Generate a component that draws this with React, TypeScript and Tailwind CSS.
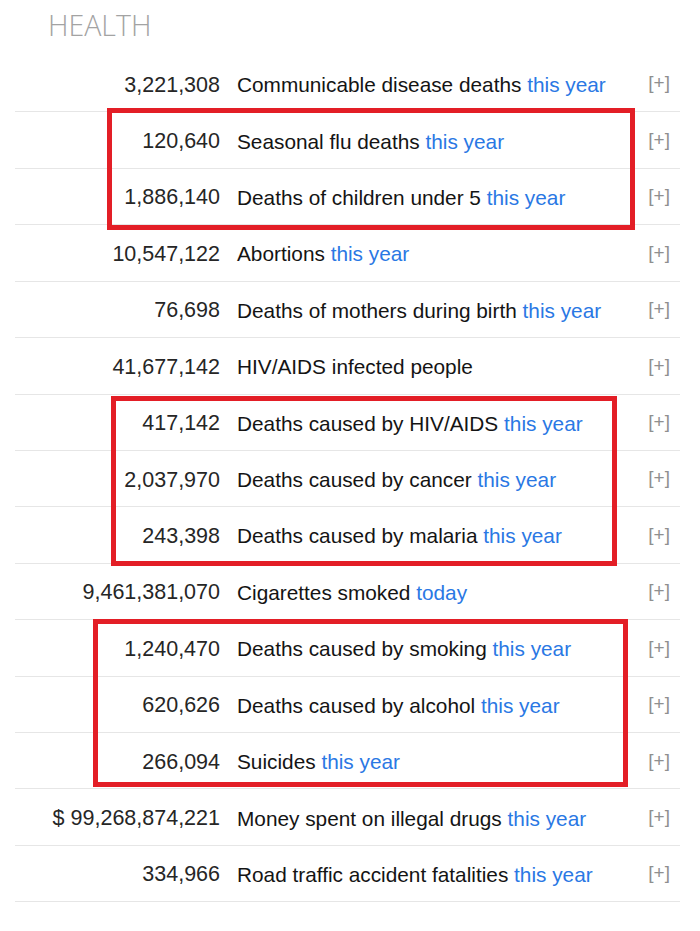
const rows: { value: string; label: string; period?: string }[] = [
  { value: '3,221,308', label: 'Communicable disease deaths', period: 'this year' },
  { value: '120,640', label: 'Seasonal flu deaths', period: 'this year' },
  { value: '1,886,140', label: 'Deaths of children under 5', period: 'this year' },
  { value: '10,547,122', label: 'Abortions', period: 'this year' },
  { value: '76,698', label: 'Deaths of mothers during birth', period: 'this year' },
  { value: '41,677,142', label: 'HIV/AIDS infected people' },
  { value: '417,142', label: 'Deaths caused by HIV/AIDS', period: 'this year' },
  { value: '2,037,970', label: 'Deaths caused by cancer', period: 'this year' },
  { value: '243,398', label: 'Deaths caused by malaria', period: 'this year' },
  { value: '9,461,381,070', label: 'Cigarettes smoked', period: 'today' },
  { value: '1,240,470', label: 'Deaths caused by smoking', period: 'this year' },
  { value: '620,626', label: 'Deaths caused by alcohol', period: 'this year' },
  { value: '266,094', label: 'Suicides', period: 'this year' },
  { value: '$ 99,268,874,221', label: 'Money spent on illegal drugs', period: 'this year' },
  { value: '334,966', label: 'Road traffic accident fatalities', period: 'this year' },
]

// red outlines drawn over groups of rows
const highlights = [
  'left-[107px] top-[108px] w-[528px] h-[122px]',
  'left-[111px] top-[396px] w-[506px] h-[170px]',
  'left-[93px] top-[619px] w-[535px] h-[168px]',
]

function CounterRow({ value, label, period }: { value: string; label: string; period?: string }) {
  return (
    <div className="flex items-center gap-[17px] h-[56.43px] pt-[2px] pr-[10px] border-b border-[#e6e6e6]">
      <div className="w-[205px] shrink-0 text-right text-[21.5px] text-[#262626] whitespace-nowrap">{value}</div>
      <div className="flex-1 text-[20.8px] text-[#141414] whitespace-nowrap">
        {label}
        {period && <span className="text-[#2a78e4]"> {period}</span>}
      </div>
      <div className="text-[19px] text-[#8f8f8f] pb-[2px]">[+]</div>
    </div>
  )
}

export default function App() {
  return (
    <div className="relative w-[700px] h-[931px] bg-white font-['Liberation_Sans',Arial,sans-serif] overflow-hidden">
      <div className="pt-[6px] pl-[48px] font-['Open_Sans',sans-serif] font-light text-[28.5px] leading-[38px] text-[#a3a3a3]">
        HEALTH
      </div>

      <div className="mt-[12px] ml-[15px] w-[665px] flex flex-col">
        {rows.map((r, i) => (
          <CounterRow key={i} {...r} />
        ))}
      </div>

      {highlights.map((pos, i) => (
        <div key={i} className={`absolute border-[5px] border-[#e31e26] ${pos}`} />
      ))}
    </div>
  )
}
